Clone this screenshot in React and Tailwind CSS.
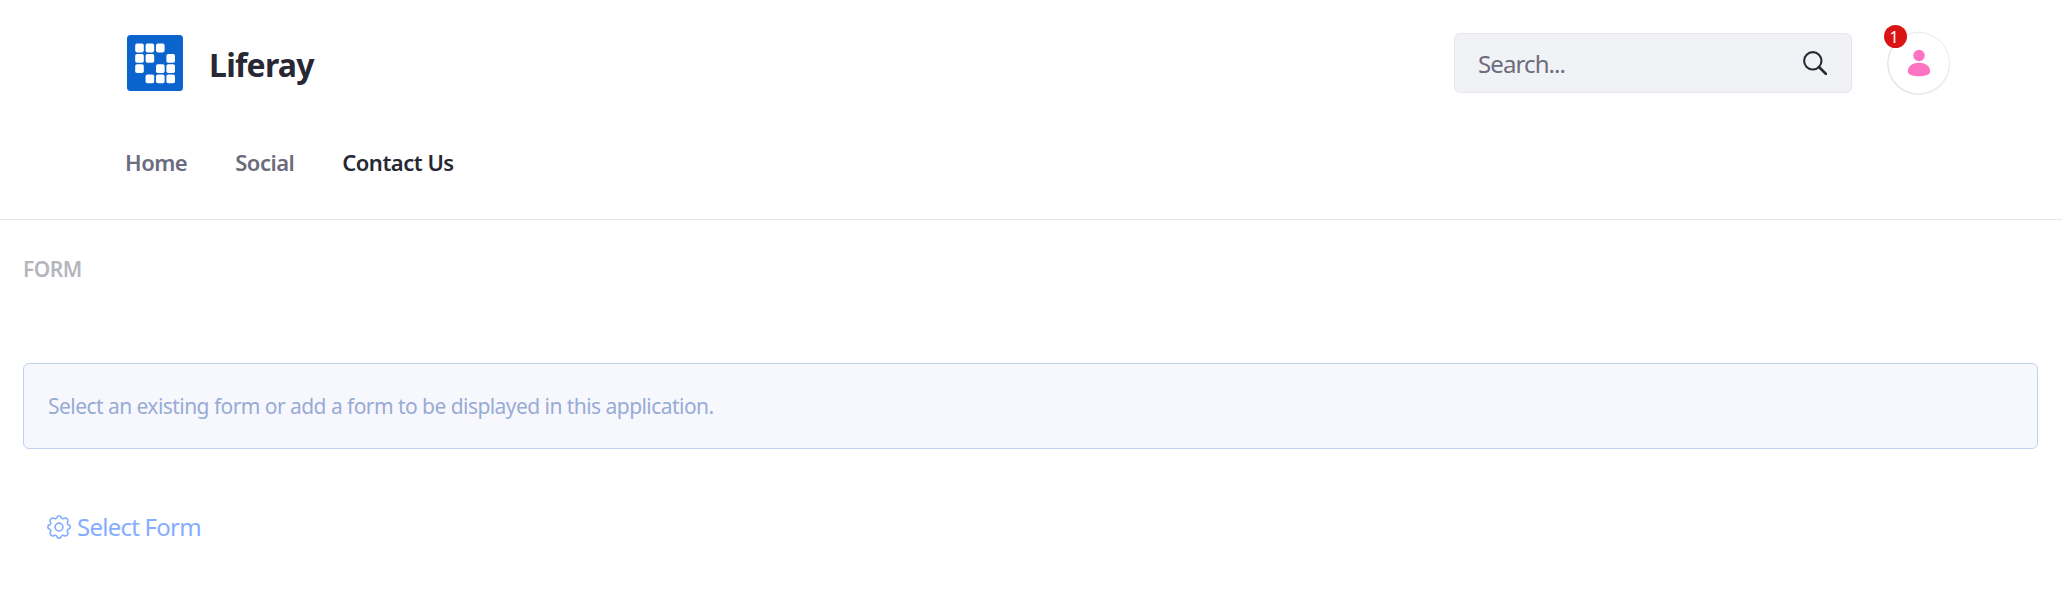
import React from "react";

const logoCells = [
  [0, 0], [1, 0], [2, 0],
  [0, 1], [1, 1], [3, 1],
  [0, 2], [2, 2], [3, 2],
  [1, 3], [2, 3], [3, 3],
];

function Logo() {
  return (
    <svg className="h-14 w-14" viewBox="0 0 56 56">
      <rect width="56" height="56" rx="3.5" fill="#0b63ce" />
      {logoCells.map(([x, y]) => (
        <rect key={`${x}-${y}`} x={8.2 + x * 10.4} y={8.6 + y * 10.3} width="8.6" height="8.8" rx="1.8" fill="#fff" />
      ))}
    </svg>
  );
}

function SearchBox() {
  return (
    <div className="mt-px flex h-[60px] w-[398px] items-center justify-between rounded-md border border-[#e7e7ed] bg-[#f1f2f5] pr-[24px] pl-[23px]">
      <span className="pt-[2px] text-[24px] leading-[36px] tracking-[-0.9px] text-[#6b6c7e]">Search...</span>
      <svg className="h-6 w-6" viewBox="0 0 24 24" fill="none" stroke="#272833">
        <circle cx="9.8" cy="9.8" r="8.7" strokeWidth="2.1" />
        <path d="M16 16l7 7" strokeWidth="2.5" strokeLinecap="round" />
      </svg>
    </div>
  );
}

function Avatar() {
  return (
    <div className="relative h-[63px] w-[63px]">
      <svg className="h-[63px] w-[63px]" viewBox="0 0 63 63">
        <path fillRule="evenodd" fill="#e7e7ed" d="M31.5 0a31.5 31.5 0 1 1 0 63a31.5 31.5 0 1 1 0-63zM31.8 1a30.2 30.2 0 1 0 0 60.4a30.2 30.2 0 1 0 0-60.4z" />
        <circle cx="32" cy="23.5" r="5.7" fill="#ff73c3" />
        <path fill="#ff73c3" d="M20.8 39.5c0-5.5 5.2-8.7 11.2-8.7s11.2 3.2 11.2 8.7c0 3.2-5 4.7-11.2 4.7s-11.2-1.5-11.2-4.7z" />
      </svg>
      <span className="absolute top-[-7px] left-[-3px] flex h-[23px] w-[23px] items-center justify-center rounded-full bg-[#da1414] pr-[3px] text-[16px] leading-none text-white">1</span>
    </div>
  );
}

function GearIcon() {
  return (
    <svg className="h-6 w-6" viewBox="0 0 24 24" fill="none" stroke="#80acff" strokeWidth="1.6">
      <path strokeLinejoin="round" d="M9.9 2.6Q10.1.8 12 .8T14.1 2.6Q15.4 4.6 17.4 3.2Q19 2.5 20.1 3.9Q21.5 5 20.8 6.6Q19.4 8.6 21.4 9.9Q23.2 10.1 23.2 12T21.4 14.1Q19.4 15.4 20.8 17.4Q21.5 19 20.1 20.1Q19 21.5 17.4 20.8Q15.4 19.4 14.1 21.4Q13.9 23.2 12 23.2T9.9 21.4Q8.6 19.4 6.6 20.8Q5 21.5 3.9 20.1Q2.5 19 3.2 17.4Q4.6 15.4 2.6 14.1Q.8 13.9 .8 12T2.6 9.9Q4.6 8.6 3.2 6.6Q2.5 5 3.9 3.9Q5 2.5 6.6 3.2Q8.6 4.6 9.9 2.6z" />
      <circle cx="12" cy="12" r="3.9" />
    </svg>
  );
}

export default function App() {
  return (
    <div className="min-h-[608px] bg-white font-['Noto_Sans','Open_Sans',sans-serif]">
      <header className="h-[220px] border-b border-[#e7e7ed] pt-[32px] pr-[112px] pl-[126px]">
        <div className="flex h-[63px] items-start justify-between">
          <div className="flex items-center gap-[26px] pt-[3px] pl-px">
            <Logo />
            <span className="pt-[3px] text-[32px] leading-[44px] font-bold tracking-[-0.75px] text-[#272833]">Liferay</span>
          </div>
          <div className="flex items-start gap-[35px]">
            <SearchBox />
            <Avatar />
          </div>
        </div>
        <nav className="mt-[50px] -ml-px flex gap-[48px] text-[22px] leading-[34px] font-semibold tracking-[-0.5px] text-[#6b6c7e]">
          <a>Home</a>
          <a>Social</a>
          <a className="text-[#272833]">Contact Us</a>
        </nav>
      </header>
      <main className="pt-[33px] pr-[24px] pl-[23px]">
        <h2 className="text-[21px] leading-[32px] font-semibold tracking-[-0.5px] text-[#b5b5be]">FORM</h2>
        <div className="mt-[78px] flex h-[86px] items-center rounded-md border border-[#c0d1f0] bg-[#f7f8fd] px-[24px] text-[21px] leading-[32px] tracking-[-0.55px] text-[#97abd6]">
          Select an existing form or add a form to be displayed in this application.
        </div>
        <a className="mt-[60px] flex items-center gap-[6px] pl-[24px] text-[24px] leading-[36px] tracking-[-0.75px] text-[#85adff]">
          <GearIcon />
          Select Form
        </a>
      </main>
    </div>
  );
}
